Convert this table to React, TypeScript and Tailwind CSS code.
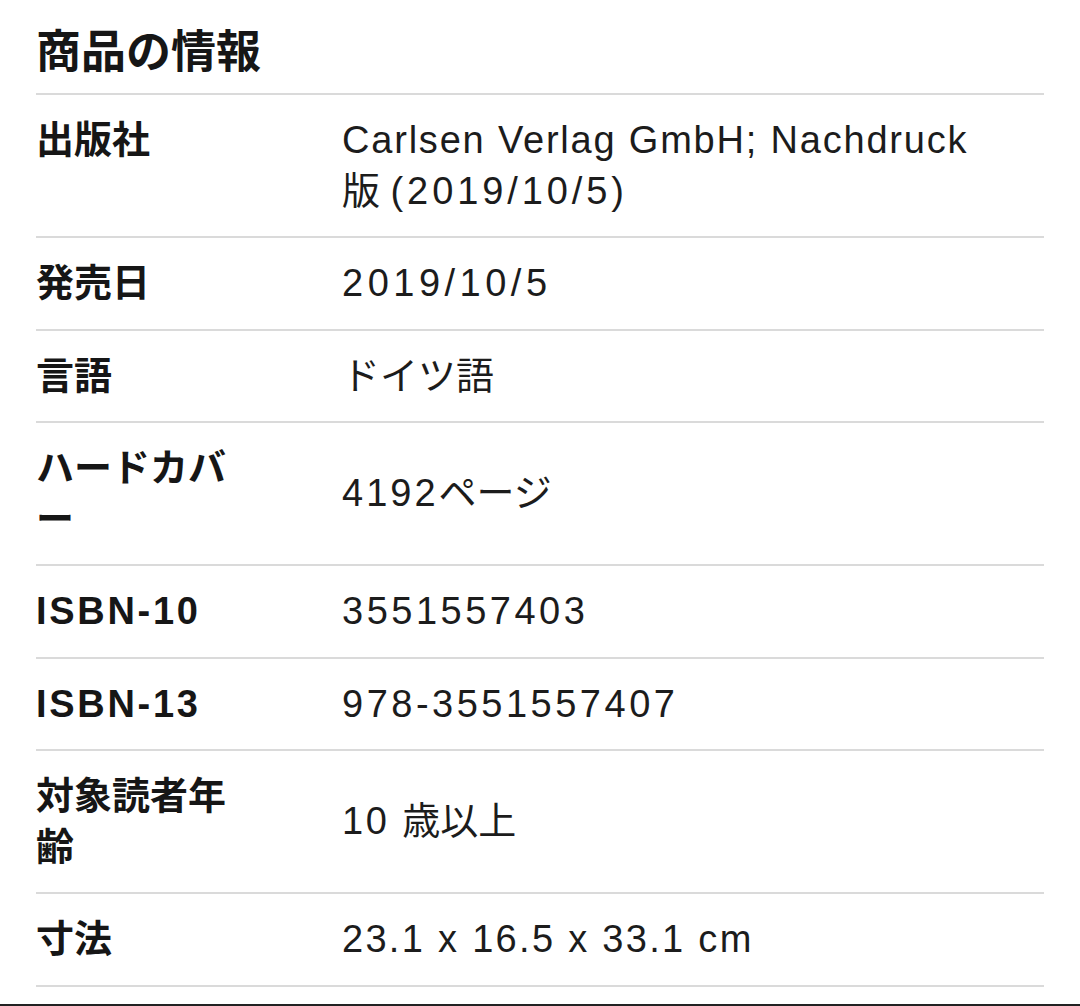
import React from "react";

const FONT = '"Liberation Sans", "Noto Sans CJK JP", sans-serif';

type Row = { label: React.ReactNode; value: React.ReactNode };

const rows: Row[] = [
  {
    label: "出版社",
    value: (
      <>
        <span className="tracking-[1.8px]">Carlsen Verlag GmbH; Nachdruck</span>
        <br />
        版 <span className="tracking-[3.9px]">(2019/10/5)</span>
      </>
    ),
  },
  { label: "発売日", value: <span className="tracking-[4.5px]">2019/10/5</span> },
  { label: "言語", value: "ドイツ語" },
  {
    label: (
      <>
        ハードカバ
        <br />ー
      </>
    ),
    value: (
      <>
        <span className="tracking-[3px]">4192</span>ページ
      </>
    ),
  },
  {
    label: <span className="tracking-[2.7px]">ISBN-10</span>,
    value: <span className="tracking-[3.5px]">3551557403</span>,
  },
  {
    label: <span className="tracking-[2.7px]">ISBN-13</span>,
    value: <span className="tracking-[3.5px]">978-3551557407</span>,
  },
  {
    label: (
      <>
        対象読者年
        <br />齢
      </>
    ),
    value: (
      <>
        <span className="tracking-[2.5px]">10 </span>歳以上
      </>
    ),
  },
  { label: "寸法", value: <span className="tracking-[2.3px]">23.1 x 16.5 x 33.1 cm</span> },
];

export default function App() {
  return (
    <div
      className="h-[1006px] w-[1080px] bg-white text-[#161616] flex flex-col overflow-hidden"
      style={{ fontFamily: FONT }}
    >
      <div className="px-9">
        <h1 className="pt-[24px] pb-[11px] text-[45px] leading-[58px] font-bold border-b-[2px] border-[#dadada]">
          商品の情報
        </h1>
        {rows.map((r, i) => (
          <div
            key={i}
            className="grid grid-cols-[306px_1fr] py-[20px] border-b-[2px] border-[#dadada] text-[38px] leading-[50.5px]"
          >
            <div className="font-bold self-start">{r.label}</div>
            <div className="font-normal self-center text-[#1c1c1c]">{r.value}</div>
          </div>
        ))}
      </div>
      <div className="flex-1" />
      <div className="h-[2px] bg-[#222]" />
    </div>
  );
}
